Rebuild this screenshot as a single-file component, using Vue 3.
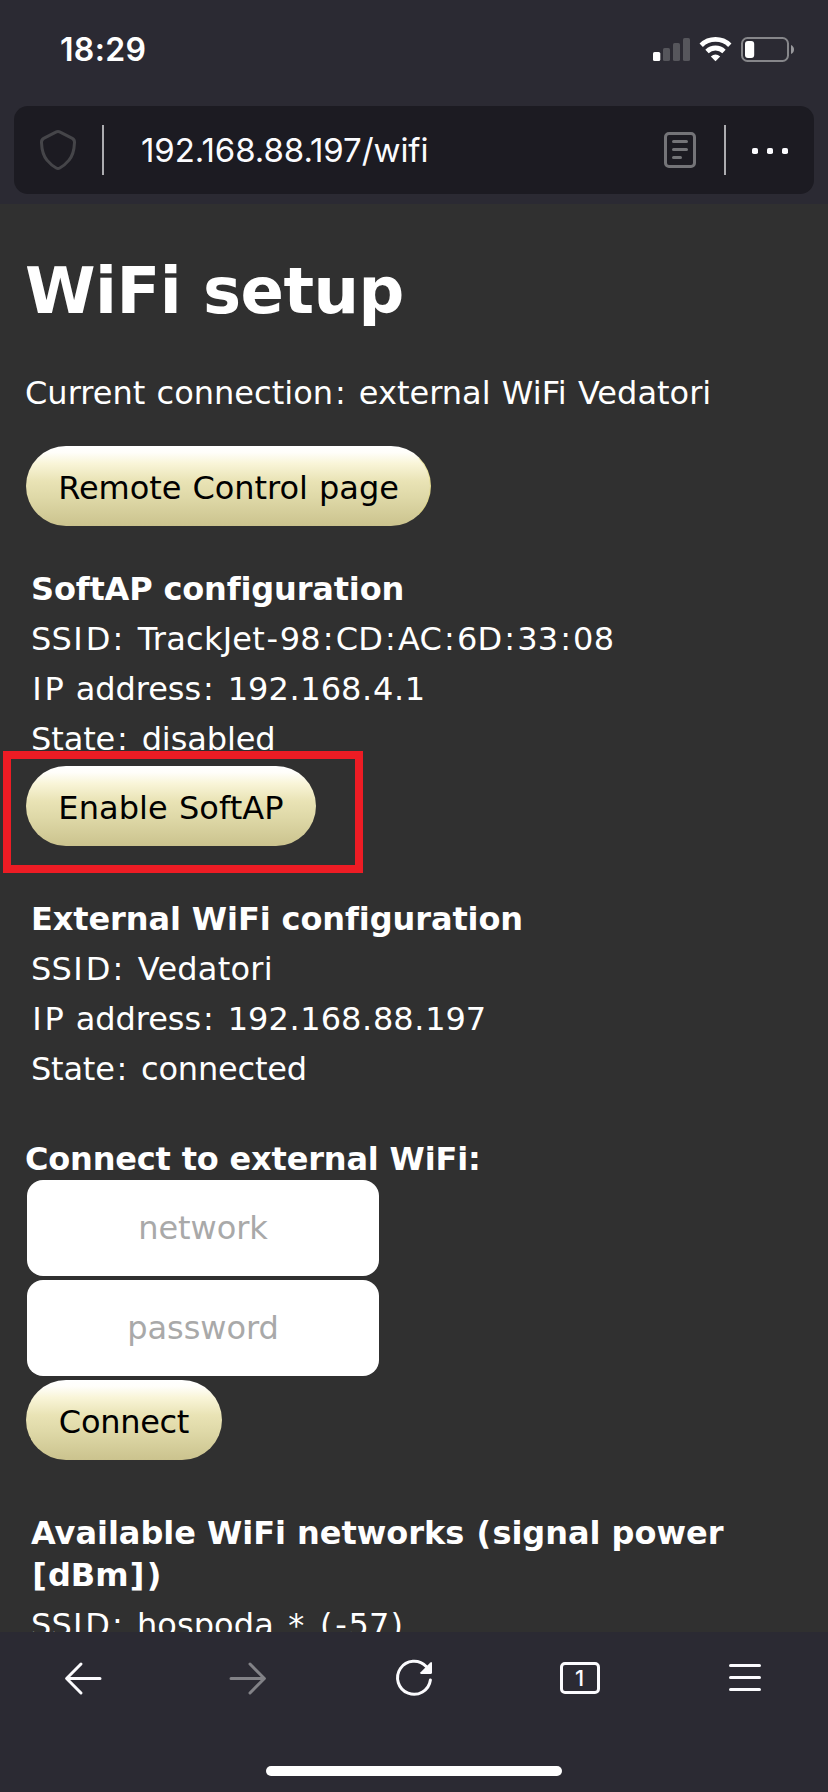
<script setup>
import { h } from 'vue'

const kinds = { I: 'cap-i', ':': 'colon', '-': 'dash', '.': 'dot', '*': 'star', '(': 'paren', ')': 'paren', '[': 'paren', ']': 'paren' }

// Renders a line, giving narrow glyphs a little extra side bearing.
const Spaced = (props) =>
  props.text
    .split(/([I:\-.*()[\]])/)
    .filter((part) => part)
    .map((part) => (kinds[part] ? h('span', { class: kinds[part] }, part) : part))
Spaced.props = ['text']

const softAp = [
  { text: 'SSID: TrackJet-98:CD:AC:6D:33:08', cls: 'track-22' },
  { text: 'IP address: 192.168.4.1', cls: 'track-m05' },
  { text: 'State: disabled', cls: 'track-m11' },
]
const external = [
  { text: 'SSID: Vedatori', cls: 'track-22' },
  { text: 'IP address: 192.168.88.197', cls: 'track-m05' },
  { text: 'State: connected', cls: 'track-m20' },
]
</script>

<template>
  <div class="screen">
    <header class="top">
      <div class="status">
        <span class="time">18:29</span>
        <svg class="signal" width="144" height="30" viewBox="0 0 144 30">
          <rect x="3" y="17" width="7.3" height="9" rx="1.6" fill="#fff" />
          <rect x="13" y="13" width="7" height="13" rx="1.6" fill="#56565c" />
          <rect x="23" y="8" width="7" height="18" rx="1.6" fill="#56565c" />
          <rect x="33" y="3" width="7" height="23" rx="1.6" fill="#56565c" />
          <g fill="none" stroke="#fff" stroke-width="4.8">
            <path d="M51.2 10.2 A20.6 20.6 0 0 1 79.8 10.2" />
            <path d="M57 16.4 A12.3 12.3 0 0 1 74 16.4" />
          </g>
          <path d="M60.8 21.4 Q65.5 17.8 70.2 21.4 L65.5 26.2 Z" fill="#fff" />
          <rect x="92" y="3" width="46" height="23" rx="5.5" fill="none" stroke="#86868a" stroke-width="2" />
          <rect x="95" y="6" width="9.2" height="17" rx="3" fill="#fff" />
          <path d="M141 10 Q144 11.5 144 14.5 Q144 17.5 141 19 Z" fill="#98989c" />
        </svg>
      </div>
      <div class="urlbar">
        <svg class="shield" width="40" height="44" viewBox="0 0 40 44">
          <path d="M18.3 3.9 Q20 2.9 21.7 3.9 L34.3 10.4 Q36.7 11.8 36.5 14.6 Q36 26.6 30.8 32.4 Q26.4 37.6 21.8 40 Q20 40.9 18.2 40 Q13.6 37.6 9.2 32.4 Q4 26.6 3.5 14.6 Q3.3 11.8 5.7 10.4 Z" fill="none" stroke="#454549" stroke-width="3" />
        </svg>
        <i class="rule"></i>
        <span class="url">192.168.88.197/wifi</span>
        <svg class="reader" width="32" height="36" viewBox="0 0 32 36" fill="none" stroke="#747478" stroke-width="3" stroke-linecap="round">
          <rect x="1.5" y="1.5" width="29" height="33" rx="3.5" />
          <path d="M9.5 9.5H22.5M9.5 17.5H22.5M9.5 25.5H16.5" />
        </svg>
        <i class="rule"></i>
        <svg class="more" width="36" height="6" viewBox="0 0 36 6" fill="#fbfbfe">
          <rect width="6" height="6" rx="1.8" />
          <rect x="15" width="6" height="6" rx="1.8" />
          <rect x="30" width="6" height="6" rx="1.8" />
        </svg>
      </div>
    </header>

    <main class="page">
      <h1>WiFi setup</h1>
      <p class="current"><Spaced text="Current connection: external WiFi Vedatori" /></p>
      <button class="pill remote">Remote Control page</button>

      <section class="group softap">
        <h2>SoftAP configuration</h2>
        <p v-for="row in softAp" :key="row.text" :class="row.cls"><Spaced :text="row.text" /></p>
      </section>
      <div class="marked">
        <button class="pill enable">Enable SoftAP</button>
        <div class="marker"></div>
      </div>

      <section class="group external">
        <h2 class="track-m10">External WiFi configuration</h2>
        <p v-for="row in external" :key="row.text" :class="row.cls"><Spaced :text="row.text" /></p>
      </section>

      <form class="join" @submit.prevent>
        <label>Connect to external WiFi:</label>
        <input type="text" placeholder="network" />
        <input type="password" placeholder="password" />
        <button class="pill connect">Connect</button>
      </form>

      <section class="group available">
        <h2><Spaced text="Available WiFi networks (signal power [dBm])" /></h2>
        <p class="track-08"><Spaced text="SSID: hospoda * (-57)" /></p>
      </section>
    </main>

    <footer class="bottom">
      <nav>
        <svg width="44" height="44" viewBox="0 0 44 44" fill="none" stroke="#fbfbfe" stroke-width="3" stroke-linecap="round" stroke-linejoin="round">
          <path d="M39 22.5H6M20 8L5.6 22.5L20 37" />
        </svg>
        <svg width="44" height="44" viewBox="0 0 44 44" fill="none" stroke="#828287" stroke-width="3" stroke-linecap="round" stroke-linejoin="round">
          <path d="M5 22.5H38M24 8L38.4 22.5L24 37" />
        </svg>
        <svg width="44" height="44" viewBox="0 0 44 44">
          <path d="M34.2 10.6 A16.5 16.5 0 1 0 38.4 24" fill="none" stroke="#fbfbfe" stroke-width="3" stroke-linecap="round" />
          <path d="M40 7 V16.5 Q40 18 38.5 18 H29 Q27.4 17.6 28.6 16.3 L38.4 6.4 Q39.6 5.4 40 7 Z" fill="#fbfbfe" />
        </svg>
        <span class="tabs">1</span>
        <svg width="44" height="44" viewBox="0 0 44 44" stroke="#fbfbfe" stroke-width="3" stroke-linecap="round">
          <path d="M7.5 9.5H36.5M7.5 21.5H36.5M7.5 33.5H36.5" />
        </svg>
      </nav>
      <div class="home"></div>
    </footer>
  </div>
</template>

<style>
body {
  background: #2b2a33;
}
</style>

<style scoped>
.screen {
  width: 828px;
  height: 1792px;
  display: flex;
  flex-direction: column;
  overflow: hidden;
  background: #2b2a33;
}
.top {
  height: 204px;
  flex: none;
}
.status {
  height: 106px;
  padding: 0 34px 0 60px;
  display: flex;
  justify-content: space-between;
  box-sizing: border-box;
}
.time {
  font: 600 32px/40px Inter, sans-serif;
  letter-spacing: 0.33px;
  color: #fff;
  margin-top: 30px;
}
.signal {
  margin-top: 35px;
}
.urlbar {
  height: 88px;
  margin: 0 14px;
  padding: 0 26px 0 24px;
  border-radius: 14px;
  background: #1c1b22;
  display: flex;
  align-items: center;
}
.rule {
  width: 2px;
  height: 50px;
  background: #acacb0;
}
.shield {
  margin-right: 24px;
}
.url {
  flex: 1;
  padding-left: 37px;
  font: 400 33px/40px Inter, sans-serif;
  letter-spacing: -0.07px;
  color: #fbfbfe;
}
.reader {
  margin-right: 28px;
}
.more {
  margin: 2px 0 0 26px;
}
.page {
  height: 1428px;
  flex: none;
  box-sizing: border-box;
  overflow: hidden;
  padding: 55px 25px 0;
  background: #303030;
  color: #fff;
  font: 32px/50px "DejaVu Sans", Verdana, sans-serif;
  font-variant-ligatures: none;
}
h1 {
  margin: 0 0 45px;
  font-size: 64px;
  line-height: 64px;
  letter-spacing: -0.51px;
}
h2 {
  margin: 0;
  font-size: 32px;
  line-height: 50px;
  letter-spacing: -0.16px;
}
p {
  margin: 0;
  word-spacing: 1px;
  white-space: nowrap;
}
.current {
  letter-spacing: 0.02px;
  margin-bottom: 28px;
}
.pill {
  display: block;
  height: 80px;
  margin-left: 1px;
  padding: 4px 0 0;
  border: 1px solid transparent;
  border-radius: 40px;
  background: linear-gradient(#fff 0%, #fffefa 8%, #f9f5d8 22%, #e9e3b5 44%, #dfd9a8 64%, #cbc38e 100%) border-box;
  color: #000;
  font: inherit;
  line-height: 74px;
  word-spacing: 1px;
  text-align: center;
}
.remote {
  width: 405px;
  letter-spacing: -0.04px;
  border-right-color: #e3d76f80;
}
.enable {
  width: 290px;
  letter-spacing: 0.06px;
}
.connect {
  width: 196px;
  letter-spacing: -0.29px;
}
.group {
  padding-left: 6px;
}
.group p {
  word-spacing: 2px;
}
.softap {
  margin-top: 38px;
}
.marked {
  position: relative;
  margin-top: 2px;
}
.marker {
  position: absolute;
  left: -22px;
  top: -15px;
  width: 360px;
  height: 122px;
  box-sizing: border-box;
  border: 8px solid #ed1c24;
  pointer-events: none;
}
.external {
  margin-top: 48px;
}
.join {
  margin-top: 44px;
}
.join label {
  display: block;
  font-weight: bold;
  line-height: 42px;
  letter-spacing: -0.18px;
}
.join input {
  display: block;
  width: 352px;
  height: 96px;
  box-sizing: border-box;
  margin: 0 0 4px 2px;
  padding: 0;
  border: 0;
  border-radius: 16px;
  background: #fff;
  font: inherit;
  text-align: center;
  letter-spacing: -0.08px;
}
.join input::placeholder {
  color: #a9a9a9;
  opacity: 1;
}
.available {
  margin-top: 52px;
}
.available h2 {
  line-height: 42px;
  margin-bottom: 4px;
  letter-spacing: -0.03px;
}
.track-22 {
  letter-spacing: 0.22px;
}
.track-08 {
  letter-spacing: 0.08px;
}
.track-m05 {
  letter-spacing: -0.05px;
}
.track-m10 {
  letter-spacing: -0.1px;
}
.track-m11 {
  letter-spacing: -0.11px;
}
.track-m20 {
  letter-spacing: -0.2px;
}
.page :deep(.cap-i) {
  padding: 0 2.8px 0 1.2px;
}
.page :deep(.colon) {
  padding: 0 1.9px;
}
.page :deep(.dash) {
  padding: 0 1.5px;
}
.page :deep(.dot) {
  padding: 0 0.75px;
}
.page :deep(.star) {
  padding: 0 2.2px;
}
.page :deep(.paren) {
  padding: 0 1.2px;
}
.bottom {
  height: 160px;
  flex: none;
}
nav {
  height: 92px;
  display: grid;
  grid-template-columns: repeat(5, 1fr);
  place-items: center;
}
.tabs {
  width: 40px;
  height: 32px;
  box-sizing: border-box;
  border: 3px solid #fbfbfe;
  border-radius: 5px;
  color: #fbfbfe;
  font: 500 22px/26px Inter, sans-serif;
  text-align: center;
}
.home {
  width: 296px;
  height: 10px;
  margin: 42px auto 0;
  border-radius: 5px;
  background: #fff;
}
</style>
